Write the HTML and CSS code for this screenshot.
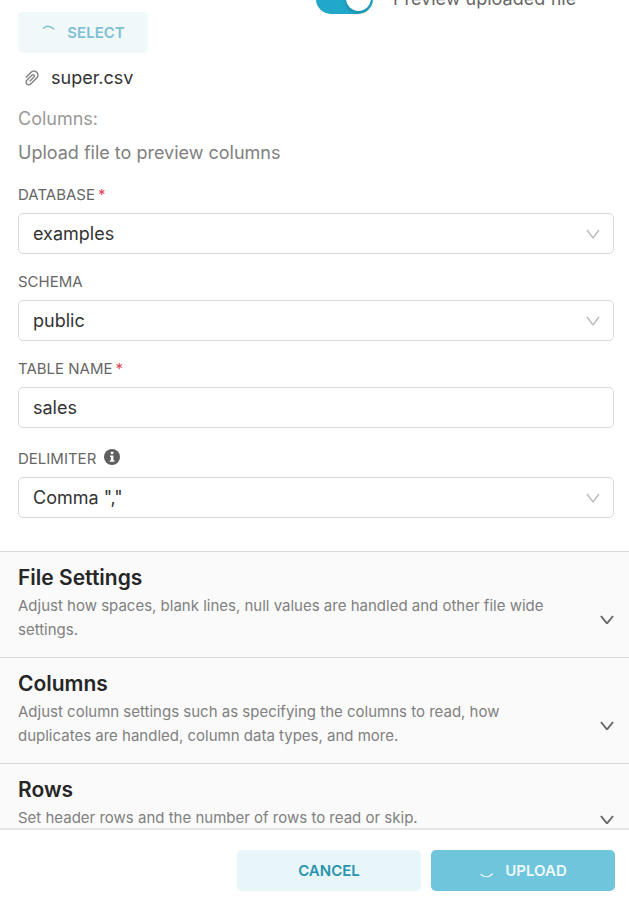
FILE: index.html
```html
<!DOCTYPE html>
<html lang="en">
<head>
<meta charset="utf-8">
<meta name="viewport" content="width=device-width, initial-scale=1">
<title>CSV upload</title>
<link rel="stylesheet" href="styles.css">
</head>
<body>
<form class="modal">
  <main class="modal-body">
    <section class="general">
      <div class="upload-row">
        <button class="btn btn-select" type="button" disabled>
          <svg class="spinner" viewBox="0 0 16 16" aria-hidden="true"><path d="M2.500 3.200C5 .8 9 .6 12.800 4"/></svg>
          SELECT
        </button>
        <label class="preview">
          <input class="switch" type="checkbox" role="switch" checked>
          <span>Preview uploaded file</span>
        </label>
      </div>
      <div class="file">
        <svg class="clip" viewBox="0 0 1024 1024" aria-hidden="true"><path d="M779.300 196.600c-94.200-94.200-247.600-94.200-341.700 0l-261 260.800c-1.700 1.700-2.600 4-2.600 6.400s.9 4.700 2.600 6.400l36.900 36.900a9 9 0 0 0 12.700 0l261-260.800c32.400-32.400 75.500-50.200 121.300-50.200s88.900 17.800 121.200 50.200c32.400 32.400 50.200 75.500 50.200 121.200 0 45.800-17.800 88.800-50.200 121.200l-266 265.900-43.100 43.100c-40.300 40.300-105.800 40.300-146.100 0-19.500-19.500-30.200-45.400-30.200-73s10.700-53.500 30.200-73l263.900-263.800c6.700-6.600 15.500-10.300 24.900-10.300h.1c9.400 0 18.100 3.700 24.700 10.300 6.700 6.700 10.300 15.500 10.300 24.900 0 9.300-3.700 18.100-10.300 24.700L372.400 653c-1.700 1.700-2.600 4-2.600 6.400s.9 4.700 2.600 6.400l36.900 36.900a9 9 0 0 0 12.700 0l215.600-215.600c19.900-19.900 30.800-46.300 30.800-74.400s-11-54.600-30.800-74.400c-41.100-41.100-107.900-41-149 0L463 364 224.800 602.100A172.220 172.220 0 0 0 174 724.800c0 46.300 18.100 89.800 50.800 122.500 33.900 33.800 78.300 50.700 122.700 50.700 44.400 0 88.800-16.900 122.600-50.700l309.200-309C824.800 492.700 850 432 850 367.500c.1-64.600-25.100-125.300-70.700-170.900z"/></svg>
        <span>super.csv</span>
      </div>
      <p class="columns-title">Columns:</p>
      <p class="columns-hint">Upload file to preview columns</p>

      <div class="field">
        <label class="field-label" for="database">DATABASE<span class="required">*</span></label>
        <div class="select-wrap">
          <select class="control" id="database" required><option>examples</option></select>
          <svg class="chevron" viewBox="0 0 14 14" aria-hidden="true"><path d="M1 3 7 11 13 3"/></svg>
        </div>
      </div>
      <div class="field">
        <label class="field-label" for="schema">SCHEMA</label>
        <div class="select-wrap">
          <select class="control" id="schema"><option>public</option></select>
          <svg class="chevron" viewBox="0 0 14 14" aria-hidden="true"><path d="M1 3 7 11 13 3"/></svg>
        </div>
      </div>
      <div class="field">
        <label class="field-label" for="table-name">TABLE NAME<span class="required">*</span></label>
        <input class="control" id="table-name" type="text" value="sales" required>
      </div>
      <div class="field">
        <div class="label-row">
          <label class="field-label" for="delimiter">DELIMITER</label>
          <svg class="info" viewBox="0 0 16 16" aria-hidden="true"><circle cx="8" cy="8" r="8"/><path d="M6.800 2.800h2.600v2.200H6.800zM6 6.500h3.400v4.800h1.100v1.500H5.800v-1.500h1.100V8H6z"/></svg>
        </div>
        <div class="select-wrap">
          <select class="control" id="delimiter"><option>Comma ","</option></select>
          <svg class="chevron" viewBox="0 0 14 14" aria-hidden="true"><path d="M1 3 7 11 13 3"/></svg>
        </div>
      </div>
    </section>

    <button class="panel" type="button" aria-expanded="false">
      <span class="panel-text">
        <span class="panel-title">File Settings</span>
        <span class="panel-desc">Adjust how spaces, blank lines, null values are handled and other file wide settings.</span>
      </span>
      <svg class="chevron" viewBox="0 0 14 14" aria-hidden="true"><path d="M1 3 7 10.500 13 3"/></svg>
    </button>
    <button class="panel" type="button" aria-expanded="false">
      <span class="panel-text">
        <span class="panel-title">Columns</span>
        <span class="panel-desc">Adjust column settings such as specifying the columns to read, how duplicates are handled, column data types, and more.</span>
      </span>
      <svg class="chevron" viewBox="0 0 14 14" aria-hidden="true"><path d="M1 3 7 10.500 13 3"/></svg>
    </button>
    <button class="panel" type="button" aria-expanded="false">
      <span class="panel-text">
        <span class="panel-title">Rows</span>
        <span class="panel-desc">Set header rows and the number of rows to read or skip.</span>
      </span>
      <svg class="chevron" viewBox="0 0 14 14" aria-hidden="true"><path d="M1 3 7 10.500 13 3"/></svg>
    </button>
  </main>
  <footer class="modal-footer">
    <button class="btn btn-cancel" type="button">CANCEL</button>
    <button class="btn btn-upload" type="submit" disabled>
      <svg class="spinner" viewBox="0 0 16 16" aria-hidden="true"><path d="M2 11.500C5.500 14.500 10 14.500 13.500 11"/></svg>
      UPLOAD
    </button>
  </footer>
</form>
</body>
</html>
```
FILE: styles.css
```css
* {
  box-sizing: border-box;
}

body {
  margin: 0;
  background: #fff;
  color: #333;
  font: 18px/28px Inter, "Liberation Sans", sans-serif;
}

button,
input,
select {
  font: inherit;
  color: inherit;
}

p {
  margin: 0;
}

.modal {
  display: flex;
  flex-direction: column;
  height: 100vh;
}

.modal-body {
  flex: 1;
  min-height: 0;
  overflow: hidden;
}

.general {
  padding: 0 15px 17px 18px;
}

/* Upload controls */
.upload-row {
  display: grid;
  grid-template-columns: 1fr 1fr;
  align-items: start;
  margin-top: -16px;
}

.preview {
  display: flex;
  align-items: center;
  gap: 20px;
  color: #666;
}

.switch {
  appearance: none;
  display: flex;
  justify-content: flex-end;
  width: 57px;
  height: 30px;
  margin: 0;
  padding: 2px;
  border-radius: 15px;
  background: #20a7c9;
}

.switch::before {
  content: "";
  width: 25px;
  height: 25px;
  border-radius: 50%;
  background: #fff;
  box-shadow: 0 2px 4px rgba(0, 35, 11, 0.2);
}

.btn {
  display: flex;
  align-items: center;
  justify-content: center;
  gap: 10px;
  height: 41px;
  padding: 0;
  border: 0;
  border-radius: 5px;
  font-size: 15px;
  font-weight: 600;
}

.btn-select {
  width: 130px;
  margin-top: 28px;
  background: #f0f8fa;
  color: #7fc0d3;
}

.spinner {
  width: 16px;
  height: 16px;
  fill: none;
  stroke: currentColor;
  stroke-width: 1.300;
  stroke-linecap: round;
}

.file {
  display: flex;
  align-items: center;
  gap: 10px;
  margin: 11px 0 0 4px;
}

.clip {
  width: 20px;
  height: 20px;
  fill: #808080;
}

.file span {
  margin-left: -1px;
}

.columns-title {
  margin-top: 13px;
  color: #999;
}

.columns-hint {
  margin: 6px 0 16px;
  color: #808080;
}

/* Fields */
.field {
  margin-bottom: 16px;
}

.field-label {
  display: block;
  margin-bottom: 6px;
  color: #666;
  font-size: 15px;
  line-height: 24px;
}

.required {
  margin-left: 3px;
  color: #e04355;
}

.label-row {
  display: flex;
  align-items: flex-end;
  gap: 8px;
  padding-top: 3px;
}

.info {
  width: 16px;
  height: 16px;
  margin-bottom: 12px;
  fill: #5f5f5f;
}

.info path {
  fill: #fff;
}

.select-wrap {
  display: grid;
  align-items: center;
}

.select-wrap > * {
  grid-area: 1 / 1;
}

.control {
  appearance: none;
  display: block;
  width: 100%;
  height: 41px;
  padding: 0 14px;
  border: 1px solid #d9d9d9;
  border-radius: 5px;
  background: #fff;
}

.chevron {
  flex: none;
  width: 14px;
  height: 14px;
  fill: none;
  stroke: #666;
  stroke-width: 2;
  stroke-linejoin: bevel;
}

.select-wrap .chevron {
  justify-self: end;
  margin-right: 14px;
  stroke: #bfbfbf;
  stroke-width: 1.500;
  pointer-events: none;
}

/* Collapsible panels */
.panel {
  display: flex;
  align-items: center;
  justify-content: space-between;
  width: 100%;
  padding: 12px 15px 15px 18px;
  border: 0;
  border-top: 1px solid #d9d9d9;
  background: #fafafa;
  text-align: left;
}

.panel .chevron {
  margin-top: 33px;
}

.panel-text,
.panel-title,
.panel-desc {
  display: block;
}

.panel-title {
  margin-bottom: 2px;
  color: #262626;
  font-size: 21px;
  font-weight: 600;
}

.panel-desc {
  max-width: 544px;
  color: #808080;
  font-size: 15px;
  line-height: 24px;
}

/* Footer */
.modal-footer {
  display: flex;
  justify-content: flex-end;
  gap: 10px;
  padding: 20px 14px 11px;
  border-top: 2px solid #e6e6e6;
}

.modal-footer .btn {
  width: 184px;
}

.btn-cancel {
  background: #e8f5f9;
  color: #2893ae;
}

.btn-upload {
  background: #6ec5dc;
  color: #f0fafc;
}
```
